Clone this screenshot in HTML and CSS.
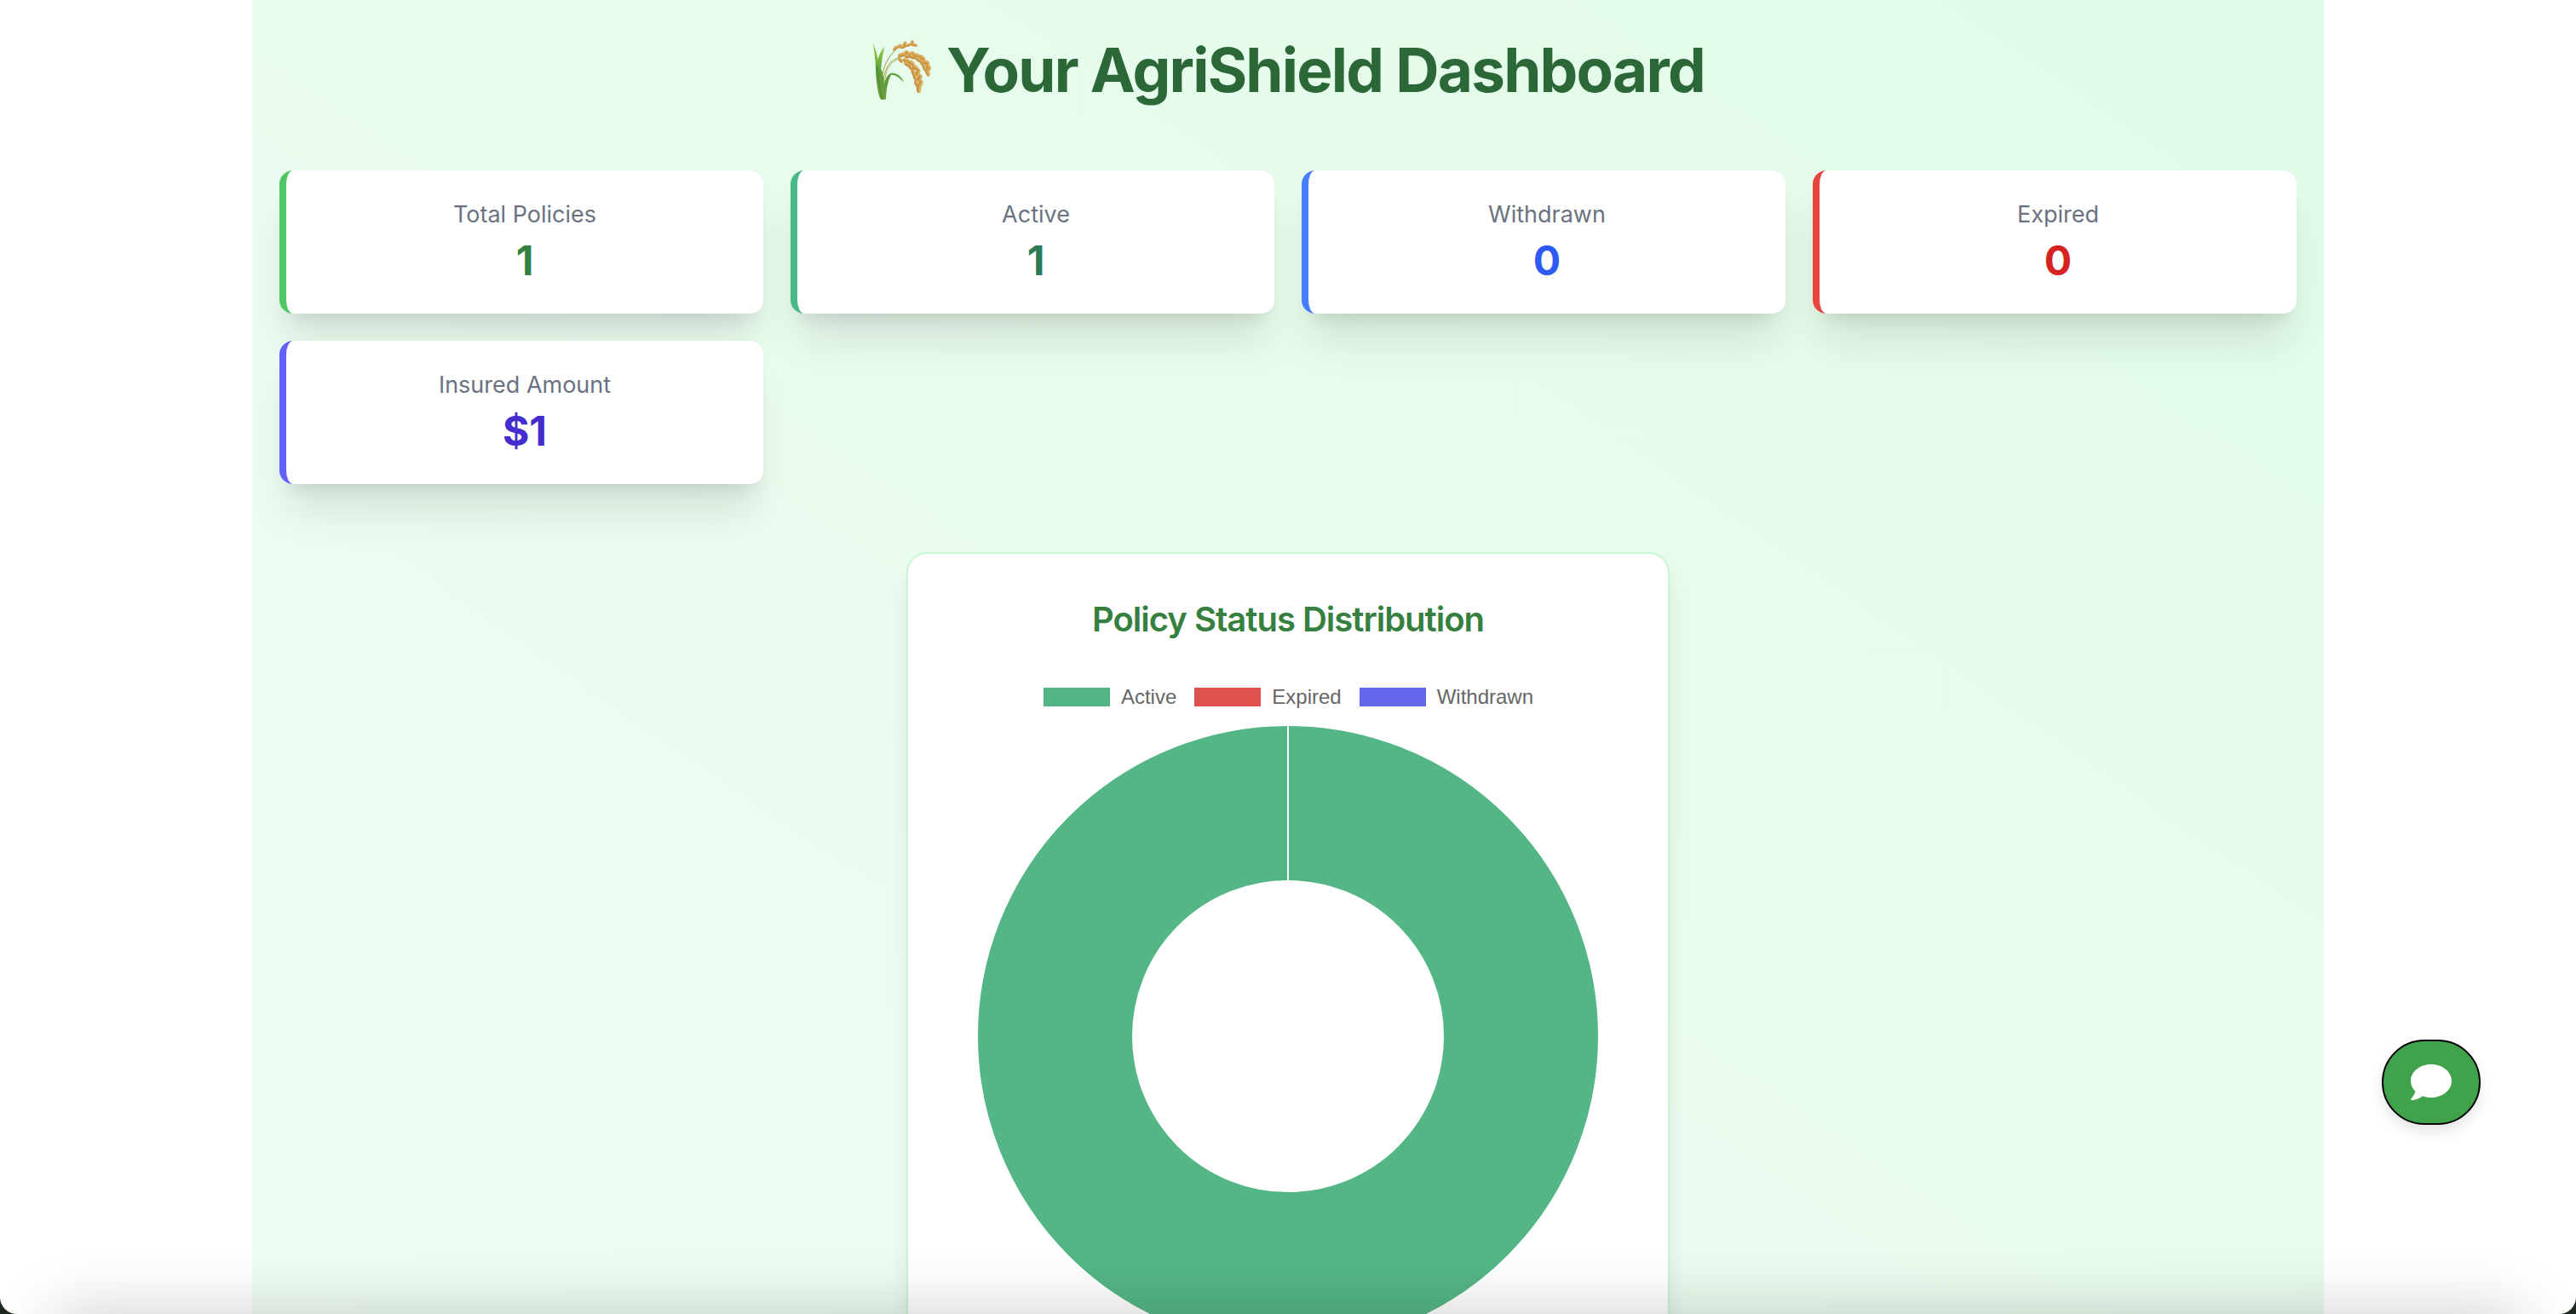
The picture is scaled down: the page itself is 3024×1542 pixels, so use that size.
FILE: index.html
```
<!DOCTYPE html>
<html lang="en">
<head>
<meta charset="utf-8">
<meta name="viewport" content="width=device-width, initial-scale=1">
<title>AgriShield Dashboard</title>
<link rel="stylesheet" href="styles.css">
</head>
<body>
<div class="window">
  <main class="dashboard">
    <h1 class="page-title">
      <svg class="rice" viewBox="36 42 216 222" aria-hidden="true">
        <defs>
          <linearGradient id="leaf" x1="0" y1="0" x2="0" y2="1">
            <stop offset="0" stop-color="#9bd148"/>
            <stop offset="0.5" stop-color="#5d9c3a"/>
            <stop offset="1" stop-color="#6da03e"/>
          </linearGradient>
          <linearGradient id="grain" x1="0" y1="0" x2="0" y2="1">
            <stop offset="0" stop-color="#edc877"/>
            <stop offset="1" stop-color="#bd7f2b"/>
          </linearGradient>
        </defs>
        <g fill="none" stroke="#9c9a3c" stroke-width="3">
          <path d="M72 190C76 140 95 105 128 76"/>
          <path d="M78 200C80 150 98 120 140 106"/>
          <path d="M83 200C84 160 98 122 140 112" stroke="#b5bd62"/>
        </g>
        <g fill="url(#leaf)">
          <path d="M40 58C50 78 56 96 58 116C62 104 70 86 82 70C76 100 70 125 70 150C76 164 80 184 80 204C84 186 92 170 104 165C124 162 142 176 151 198C138 184 124 170 106 170C96 184 88 220 87 256Q77 260 67 256C58 230 52 190 51 152C51 118 46 84 40 58Z"/>
        </g>
        <path d="M55 140C58 180 66 220 74 254" fill="none" stroke="#3f7d30" stroke-width="5" opacity=".5"/>
        <g fill="url(#grain)" stroke="#c08a3c" stroke-width="1">
          <ellipse cx="119" cy="77" rx="10" ry="5" transform="rotate(-50 119 77)"/>
          <ellipse cx="133" cy="70" rx="10" ry="5" transform="rotate(-40 133 70)"/>
          <ellipse cx="146" cy="72" rx="12" ry="5" transform="rotate(-12 146 72)"/>
          <ellipse cx="152" cy="61" rx="9" ry="5" transform="rotate(-55 152 61)"/>
          <ellipse cx="164" cy="66" rx="11" ry="5" transform="rotate(-8 164 66)"/>
          <ellipse cx="178" cy="57" rx="9" ry="5" transform="rotate(-60 178 57)"/>
          <ellipse cx="186" cy="65" rx="12" ry="5" transform="rotate(12 186 65)"/>
          <ellipse cx="140" cy="101" rx="11" ry="7" transform="rotate(-15 140 101)"/>
          <ellipse cx="155" cy="94" rx="12" ry="7" transform="rotate(-35 155 94)"/>
          <ellipse cx="161" cy="104" rx="12" ry="7" transform="rotate(12 161 104)"/>
          <ellipse cx="175" cy="96" rx="12" ry="7" transform="rotate(-18 175 96)"/>
          <ellipse cx="180" cy="107" rx="12" ry="7" transform="rotate(22 180 107)"/>
          <ellipse cx="194" cy="102" rx="12" ry="7" transform="rotate(8 194 102)"/>
          <ellipse cx="201" cy="116" rx="12" ry="7" transform="rotate(38 201 116)"/>
          <ellipse cx="214" cy="110" rx="12" ry="7" transform="rotate(35 214 110)"/>
          <ellipse cx="216" cy="130" rx="12" ry="7" transform="rotate(52 216 130)"/>
          <ellipse cx="228" cy="126" rx="12" ry="7" transform="rotate(22 228 126)"/>
          <ellipse cx="224" cy="146" rx="12" ry="7" transform="rotate(65 224 146)"/>
          <ellipse cx="237" cy="143" rx="12" ry="7" transform="rotate(68 237 143)"/>
          <ellipse cx="234" cy="162" rx="14" ry="7" transform="rotate(72 234 162)"/>
          <ellipse cx="139" cy="119" rx="10" ry="6" transform="rotate(50 139 119)"/>
          <ellipse cx="157" cy="119" rx="11" ry="7" transform="rotate(15 157 119)"/>
          <ellipse cx="161" cy="132" rx="11" ry="7" transform="rotate(35 161 132)"/>
          <ellipse cx="176" cy="128" rx="12" ry="7" transform="rotate(28 176 128)"/>
          <ellipse cx="174" cy="143" rx="12" ry="7" transform="rotate(55 174 143)"/>
          <ellipse cx="190" cy="144" rx="12" ry="7" transform="rotate(35 190 144)"/>
          <ellipse cx="184" cy="161" rx="13" ry="7" transform="rotate(75 184 161)"/>
          <ellipse cx="200" cy="162" rx="13" ry="7" transform="rotate(105 200 162)"/>
          <ellipse cx="191" cy="180" rx="13" ry="7" transform="rotate(65 191 180)"/>
          <ellipse cx="206" cy="182" rx="13" ry="7" transform="rotate(110 206 182)"/>
          <ellipse cx="195" cy="201" rx="13" ry="7" transform="rotate(70 195 201)"/>
          <ellipse cx="209" cy="202" rx="13" ry="7" transform="rotate(110 209 202)"/>
          <ellipse cx="203" cy="219" rx="15" ry="8" transform="rotate(92 203 219)"/>
        </g>
      </svg>
      <span>Your AgriShield Dashboard</span>
    </h1>

    <section class="stats" aria-label="Policy summary">
      <article class="stat stat-total">
        <h2 class="stat-label">Total Policies</h2>
        <p class="stat-value">1</p>
      </article>
      <article class="stat stat-active">
        <h2 class="stat-label">Active</h2>
        <p class="stat-value">1</p>
      </article>
      <article class="stat stat-withdrawn">
        <h2 class="stat-label">Withdrawn</h2>
        <p class="stat-value">0</p>
      </article>
      <article class="stat stat-expired">
        <h2 class="stat-label">Expired</h2>
        <p class="stat-value">0</p>
      </article>
      <article class="stat stat-insured">
        <h2 class="stat-label">Insured Amount</h2>
        <p class="stat-value">$1</p>
      </article>
    </section>

    <section class="chart-card">
      <h2 class="chart-title">Policy Status Distribution</h2>
      <ul class="legend">
        <li class="legend-item"><span class="swatch swatch-active"></span>Active</li>
        <li class="legend-item"><span class="swatch swatch-expired"></span>Expired</li>
        <li class="legend-item"><span class="swatch swatch-withdrawn"></span>Withdrawn</li>
      </ul>
      <svg class="donut" viewBox="0 0 728 728" role="img" aria-label="All policies are active">
        <circle cx="364" cy="364" r="273.5" fill="none" stroke="#55b685" stroke-width="181"/>
        <path d="M364 0V184" stroke="#fff" stroke-width="2"/>
      </svg>
    </section>
  </main>
  <button class="chat-button" type="button" aria-label="Open chat">
    <svg class="chat-icon" viewBox="0 0 512 512" aria-hidden="true">
      <path fill="currentColor" d="M256 32C114.600 32 0 125.100 0 240c0 49.600 21.400 95 57 130.700C44.500 421.100 2.700 466 2.200 466.500c-2.200 2.300-2.800 5.700-1.500 8.700S4.800 480 8 480c66.300 0 116-31.800 140.600-51.400 32.700 12.300 69 19.400 107.400 19.400 141.400 0 256-93.100 256-208S397.400 32 256 32z"/>
    </svg>
  </button>
  <div class="window-shade"></div>
</div>
</body>
</html>
```

FILE: styles.css
```
* {
  box-sizing: border-box;
  margin: 0;
  padding: 0;
}

body {
  background: #20291f;
  font-family: Inter, "Liberation Sans", sans-serif;
}

.window {
  position: relative;
  height: 100vh;
  overflow: hidden;
  background: #fff;
  border-radius: 0 0 20px 20px;
}

.dashboard {
  max-width: 2432px;
  margin: 0 auto;
  padding: 42px 32px;
  background: linear-gradient(to top right, #f0fdf4, #e1fbe8);
}

.page-title {
  display: flex;
  justify-content: center;
  align-items: center;
  gap: 16px;
  margin-bottom: 78px;
  color: #2c6737;
  font-size: 71px;
  font-weight: 700;
  line-height: 80px;
  letter-spacing: -0.025em;
}

.rice {
  width: 72px;
  height: 74px;
}

.stats {
  display: grid;
  grid-template-columns: repeat(4, 1fr);
  gap: 32px;
  margin-bottom: 80px;
}

.stat {
  padding: 32px 32px 30px;
  border-left: 8px solid;
  border-radius: 16px;
  background: #fff;
  text-align: center;
  box-shadow: 0 40px 50px -10px rgba(0, 0, 0, 0.1), 0 16px 20px -12px rgba(0, 0, 0, 0.1);
}

.stat-label {
  margin-bottom: 2px;
  color: #6a7282;
  font-size: 27px;
  font-weight: 400;
  line-height: 40px;
}

.stat-value {
  font-size: 48px;
  font-weight: 700;
  line-height: 64px;
}

.stat-total { border-color: #4fc764; }
.stat-total .stat-value { color: #348040; }
.stat-active { border-color: #47b984; }
.stat-active .stat-value { color: #2c7a58; }
.stat-withdrawn { border-color: #477dfb; }
.stat-withdrawn .stat-value { color: #2e5af2; }
.stat-expired { border-color: #e84440; }
.stat-expired .stat-value { color: #d42320; }
.stat-insured { border-color: #625ffa; }
.stat-insured .stat-value { color: #442ccd; }

.chart-card {
  max-width: 896px;
  margin: 0 auto;
  padding: 48px;
  border: 2px solid #c6f6d3;
  border-radius: 24px;
  background: #fff;
  box-shadow: 0 20px 30px -6px rgba(0, 0, 0, 0.1), 0 8px 12px -8px rgba(0, 0, 0, 0.1);
}

.chart-title {
  margin-bottom: 50px;
  color: #35803f;
  font-size: 40px;
  font-weight: 600;
  line-height: 58px;
  letter-spacing: -0.025em;
  text-align: center;
}

.legend {
  display: flex;
  justify-content: center;
  gap: 20px;
  margin-bottom: 22px;
  list-style: none;
  color: #666;
  font-family: "Liberation Sans", sans-serif;
  font-size: 24px;
  line-height: 24px;
}

.legend-item {
  display: flex;
  align-items: center;
  gap: 12px;
}

.swatch {
  width: 80px;
  height: 24px;
  border: 1px solid #fff;
}

.swatch-active { background: #55b685; }
.swatch-expired { background: #de514d; }
.swatch-withdrawn { background: #6466e9; }

.donut {
  display: block;
  width: 728px;
  max-width: 100%;
  margin: 0 auto;
}

.chat-button {
  position: absolute;
  right: 112px;
  bottom: 222px;
  display: flex;
  padding: 24px 32px;
  border: 2px solid #000;
  border-radius: 50px;
  background: #40a34b;
  color: #fff;
  box-shadow: 0 8px 16px rgba(0, 0, 0, 0.1);
}

.chat-icon {
  width: 48px;
  height: 48px;
}

/* Soft shade along the bottom edge of the window */
.window-shade {
  position: absolute;
  top: 100%;
  left: 64px;
  right: 64px;
  height: 160px;
  box-shadow: 0 0 80px rgba(0, 0, 0, 0.2);
  pointer-events: none;
}
```
